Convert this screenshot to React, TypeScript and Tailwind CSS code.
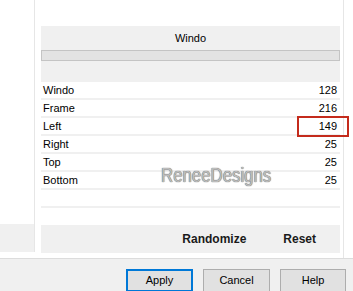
import React from 'react';

const rows = [
  { label: 'Windo', value: 128 },
  { label: 'Frame', value: 216 },
  { label: 'Left', value: 149 },
  { label: 'Right', value: 25 },
  { label: 'Top', value: 25 },
  { label: 'Bottom', value: 25 },
];

const font = { fontFamily: '"Liberation Sans", Arial, sans-serif' };

export default function App() {
  return (
    <div
      className="relative w-[353px] h-[291px] bg-white overflow-hidden flex flex-col text-[11px] text-black"
      style={font}
    >
      <div className="flex h-[258px]">
        {/* left strip */}
        <div className="w-[34px] flex flex-col">
          <div className="h-[224px]" />
          <div className="h-[28px] bg-[#f0f0f0]" />
        </div>
        <div className="w-px h-[252px] bg-[#e6e6e6]" />
        <div className="w-[6px]" />

        {/* panel */}
        <div className="w-[299px] flex flex-col">
          <div className="h-[26px]" />
          <div className="h-[56px] bg-[#f0f0f0] flex flex-col">
            <div className="h-[24px] flex items-center justify-center">Windo</div>
            <div className="h-[11px] border border-[#c4c4c4] bg-[#e3e3e3]" />
          </div>
          {rows.map((r) => (
            <div
              key={r.label}
              className="h-[18px] flex items-center justify-between pl-[2px] pr-[3px] border-b-2 border-[#f0f0f0]"
            >
              <span>{r.label}</span>
              <span>{r.value}</span>
            </div>
          ))}
          <div className="h-[18px] border-b-2 border-[#f0f0f0]" />
          <div className="h-[17px]" />
          <div className="h-[28px] bg-[#f0f0f0] flex items-center justify-end pr-[24px] gap-[37px] text-[12px] font-bold text-[#1a1a1a]">
            <span>Randomize</span>
            <span>Reset</span>
          </div>
        </div>

        <div className="w-[3px]" />
        <div className="w-px h-[258px] bg-[#e6e6e6]" />
        <div className="flex-1" />
      </div>

      {/* bottom bar */}
      <div className="flex-1 border-t border-[#dcdcdc] bg-[#f0f0f0] flex items-start pt-[10px] pl-[126px] gap-[10px]">
        <button className="w-[67px] h-[23px] shrink-0 bg-[#e1e1e1] border-2 border-[#0078d7] flex items-center justify-center">
          Apply
        </button>
        <button className="w-[67px] h-[23px] shrink-0 bg-[#e1e1e1] border border-[#adadad] flex items-center justify-center">
          Cancel
        </button>
        <button className="w-[66px] h-[23px] shrink-0 bg-[#e1e1e1] border border-[#adadad] flex items-center justify-center">
          Help
        </button>
      </div>

      {/* highlight box */}
      <div className="absolute left-[297px] top-[116px] w-[52px] h-[21px] border-2 border-[#c42b1c]" />

      {/* watermark */}
      <div
        className="absolute left-[148px] top-[159px] w-[130px] text-center text-[21px] text-[#bdbdbd] scale-x-[0.8] pointer-events-none"
        style={{ textShadow: '0 0 1px #6f6f6f, 0 0 1px #6f6f6f' }}
      >
        ReneeDesigns
      </div>
    </div>
  );
}
